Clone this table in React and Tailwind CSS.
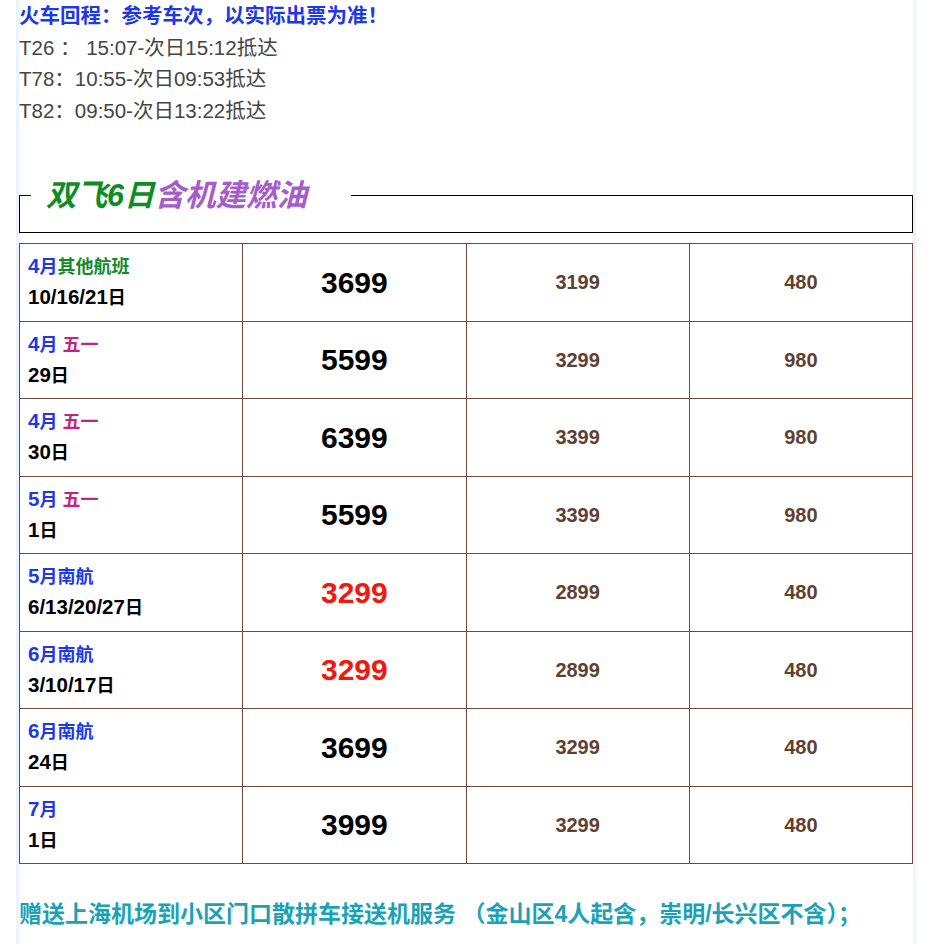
const FONT = { fontFamily: '"Liberation Sans", Arial, "Noto Sans CJK SC", sans-serif' };

const ROWS = [
  { month: "4月", tag: "其他航班", tagClass: "text-[#148a2b]", day: "10/16/21日", price: "3699", red: false, p2: "3199", p3: "480" },
  { month: "4月", tag: " 五一", tagClass: "text-[#c6247c]", day: "29日", price: "5599", red: false, p2: "3299", p3: "980" },
  { month: "4月", tag: " 五一", tagClass: "text-[#c6247c]", day: "30日", price: "6399", red: false, p2: "3399", p3: "980" },
  { month: "5月", tag: " 五一", tagClass: "text-[#c6247c]", day: "1日", price: "5599", red: false, p2: "3399", p3: "980" },
  { month: "5月南航", tag: "", tagClass: "", day: "6/13/20/27日", price: "3299", red: true, p2: "2899", p3: "480" },
  { month: "6月南航", tag: "", tagClass: "", day: "3/10/17日", price: "3299", red: true, p2: "2899", p3: "480" },
  { month: "6月南航", tag: "", tagClass: "", day: "24日", price: "3699", red: false, p2: "3299", p3: "480" },
  { month: "7月", tag: "", tagClass: "", day: "1日", price: "3999", red: false, p2: "3299", p3: "480" },
];

// digits in the first column render larger than the CJK glyphs
function Mixed({ text }) {
  const parts = text.match(/[0-9/]+|[^0-9/]+/g) || [];
  return parts.map((part, i) =>
    /[0-9]/.test(part) ? (
      <span key={i} className="text-[20.5px]">{part}</span>
    ) : (
      <span key={i}>{part}</span>
    ),
  );
}

export default function App() {
  return (
    <div className="min-h-[944px] bg-white" style={FONT}>
      <div className="ml-[16px] w-[900px] min-h-[944px] border-x-[3px] border-[#eaf4fd]">
        <section className="text-[20.5px] leading-[31.5px] text-[#454545]">
          <p className="font-bold text-[#1c38e8]">火车回程：参考车次，以实际出票为准！</p>
          <p>T26 ： 15:07-次日15:12抵达</p>
          <p>T78：10:55-次日09:53抵达</p>
          <p>T82：09:50-次日13:22抵达</p>
        </section>

        <fieldset className="mt-[54px] border border-black pb-[22px]">
          <legend className="ml-[11px] pl-[15px] pr-[44px] text-[30.5px] leading-[30px] font-bold italic">
            <span className="text-[#0f8c24]">双飞6日</span>
            <span className="text-[#a65ccc]">含机建燃油</span>
          </legend>
        </fieldset>

        <table className="mt-[10px] w-full table-fixed border-collapse">
          <tbody>
            {ROWS.map((row, i) => (
              <tr key={i} className="h-[77.5px]">
                <td className="border border-[#6e4d3f] pl-[8px] align-middle font-bold text-[18px] leading-[30px]">
                  <div>
                    <span className="text-[#1c38e8]">
                      <Mixed text={row.month} />
                    </span>
                    {row.tag && <span className={row.tagClass}>{row.tag}</span>}
                  </div>
                  <div className="text-black">
                    <Mixed text={row.day} />
                  </div>
                </td>
                <td className={`border border-[#6e4d3f] text-center align-middle font-bold text-[30px] ${row.red ? "text-[#f3180f]" : "text-black"}`}>
                  {row.price}
                </td>
                <td className="border border-[#6e4d3f] text-center align-middle font-bold text-[20px] text-[#5f4131]">
                  {row.p2}
                </td>
                <td className="border border-[#6e4d3f] text-center align-middle font-bold text-[20px] text-[#5f4131]">
                  {row.p3}
                </td>
              </tr>
            ))}
          </tbody>
        </table>

        <p className="mt-[35px] text-[23px] leading-[30px] font-bold text-[#1aa2b6]">
          赠送上海机场到小区门口散拼车接送机服务 （金山区4人起含，崇明/长兴区不含）；
        </p>
      </div>
    </div>
  );
}
